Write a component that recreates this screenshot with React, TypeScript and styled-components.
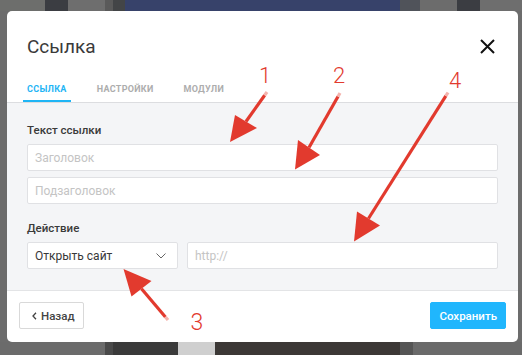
import * as React from 'react';
import styled, {createGlobalStyle} from 'styled-components';

const GlobalStyle = createGlobalStyle`
  html, body {
    margin: 0;
    padding: 0;
    width: 522px;
    height: 355px;
    overflow: hidden;
  }
  body {
    font-family: Roboto, "Noto Sans", "Liberation Sans", sans-serif;
  }
  * {
    box-sizing: border-box;
  }
`;

// the page behind the dialog: a dimmed site, only strips of it visible
const Backdrop = styled.div`
  position: relative;
  width: 522px;
  height: 355px;
  padding: 11px 4px 0 7px;
  background:
    linear-gradient(90deg,
      #6d6e6c 0 45px, #3b3d42 45px 68px, #6e6e6e 68px 105px,
      #5a5a5a 105px 113px, #434547 113px 125px, #37426a 125px 400px,
      #50535a 400px 420px, #6c6c6c 420px 457px, #3b3d42 457px 480px,
      #6e6e6e 480px) top / 100% 11px no-repeat,
    linear-gradient(90deg,
      #6b6b6b 0 105px, #4a4a4a 105px 113px, #3a3a3a 113px 178px,
      #cfcfcf 178px 215px, #3c3836 215px 400px, #555 400px 413px,
      #6a6a6a 413px) bottom / 100% 13px no-repeat,
    #6c6c6c;
`;

const Modal = styled.div`
  width: 511px;
  height: 331px;
  background: #fff;
  border-radius: 5px;
  display: flex;
  flex-direction: column;
  overflow: hidden;
`;

const Header = styled.div`
  height: 70px;
  flex: none;
  display: flex;
  align-items: center;
  justify-content: space-between;
  padding: 0 23px 0 20px;
`;

const Title = styled.div`
  font-size: 19px;
  line-height: 19px;
  color: #3a3a3a;
`;

const CloseBtn = styled.div`
  width: 15px;
  height: 15px;
  display: flex;
`;

const Tabs = styled.div`
  display: flex;
  flex: none;
  gap: 22px;
  padding: 0 16px;
  border-bottom: 1px solid #dcdde0;
`;

const Tab = styled.div<{ $active?: boolean }>`
  padding: 2px 4px 7px;
  font-size: 9px;
  line-height: 12px;
  font-weight: 700;
  letter-spacing: 0.3px;
  text-transform: uppercase;
  color: ${p => (p.$active ? '#1fb5f5' : '#adadad')};
  box-shadow: ${p => (p.$active ? 'inset 0 -2px 0 #1fb5f5' : 'none')};
`;

const Body = styled.div`
  flex: 1;
  background: #f4f5f7;
  padding: 20px 20px 0;
  display: flex;
  flex-direction: column;
`;

const Label = styled.div<{ $top?: number }>`
  font-size: 11.5px;
  line-height: 14px;
  font-weight: 500;
  color: #3a3a3a;
  margin: ${p => p.$top ?? 0}px 0 7px;
`;

const Field = styled.div<{ $muted?: boolean }>`
  height: 27px;
  flex: none;
  background: #fff;
  border: 1px solid #e0e1e4;
  border-radius: 2px;
  padding: 0 11px 0 7px;
  display: flex;
  align-items: center;
  justify-content: space-between;
  font-size: 12px;
  color: ${p => (p.$muted ? '#c4c4c4' : '#383838')};
`;

const Stack = styled.div`
  display: flex;
  flex-direction: column;
  gap: 6px;
`;

const Row = styled.div`
  display: grid;
  grid-template-columns: 151px 1fr;
  gap: 9px;
`;

const Footer = styled.div`
  height: 52px;
  flex: none;
  border-top: 1px solid #e3e4e6;
  display: flex;
  align-items: flex-start;
  justify-content: space-between;
  padding: 11px 12px 0;
`;

const Button = styled.div<{ $primary?: boolean }>`
  height: 27px;
  padding: 0 ${p => (p.$primary ? 8 : 8)}px 0 ${p => (p.$primary ? 8 : 12)}px;
  display: flex;
  align-items: center;
  gap: 4px;
  border-radius: 2px;
  font-size: 11.5px;
  font-weight: 500;
  color: ${p => (p.$primary ? '#fff' : '#444')};
  background: ${p => (p.$primary ? '#20b6fd' : '#fff')};
  border: 1px solid ${p => (p.$primary ? '#20b6fd' : '#d9d9d9')};
`;

const Overlay = styled.svg`
  position: absolute;
  left: 0;
  top: 0;
  pointer-events: none;
`;

const Num = styled.text`
  font-family: Roboto, "Liberation Sans", sans-serif;
  font-weight: 300;
  fill: #e23a2e;
`;

type Arrow = {
  tail: [number, number];
  tip: [number, number];
  wings: [[number, number], [number, number]];
};

const arrows: Arrow[] = [
  {tail: [267, 92], tip: [230, 142], wings: [[235, 115], [257, 128]]},
  {tail: [340, 93], tip: [295, 169.5], wings: [[298, 140], [320, 155]]},
  {tail: [448, 92.5], tip: [354, 241.5], wings: [[357, 211.5], [380, 225.5]]},
  {tail: [168, 320], tip: [123.5, 269], wings: [[131.5, 296.5], [151.5, 281]]},
];

const numbers = [
  {n: '1', x: 265, y: 83, size: 22},
  {n: '2', x: 339, y: 82.5, size: 22},
  {n: '4', x: 455, y: 88, size: 22},
  {n: '3', x: 197, y: 330, size: 23},
];

function Annotations() {
  return (
    <Overlay width={522} height={355} viewBox="0 0 522 355">
      {arrows.map((a, i) => {
        const [tx, ty] = a.tail;
        const [w1, w2] = a.wings;
        const bx = (w1[0] + w2[0]) / 2;
        const by = (w1[1] + w2[1]) / 2;
        const dx = bx - tx;
        const dy = by - ty;
        const len = Math.hypot(dx, dy);
        const fx = tx + (dx / len) * 4;
        const fy = ty + (dy / len) * 4;
        return (
          <g key={i}>
            <line x1={fx} y1={fy} x2={bx} y2={by} stroke="#e23a2e" strokeWidth={3.2}/>
            <line x1={tx} y1={ty} x2={fx} y2={fy} stroke="#f4b3ad" strokeWidth={3.2}/>
            <polygon
              points={`${a.tip.join(',')} ${w1.join(',')} ${w2.join(',')}`}
              fill="#e23a2e"
            />
          </g>
        );
      })}
      {numbers.map(d => (
        <Num key={d.n} x={d.x} y={d.y} fontSize={d.size} textAnchor="middle">
          {d.n}
        </Num>
      ))}
    </Overlay>
  );
}

export default function App() {
  return (
    <Backdrop>
      <GlobalStyle/>
      <Modal>
        <Header>
          <Title>Ссылка</Title>
          <CloseBtn>
            <svg width="15" height="15" viewBox="0 0 15 15">
              <path d="M1 1 L14 14 M14 1 L1 14" stroke="#111" strokeWidth="2"/>
            </svg>
          </CloseBtn>
        </Header>
        <Tabs>
          <Tab $active>Ссылка</Tab>
          <Tab>Настройки</Tab>
          <Tab>Модули</Tab>
        </Tabs>
        <Body>
          <Label>Текст ссылки</Label>
          <Stack>
            <Field $muted>Заголовок</Field>
            <Field $muted>Подзаголовок</Field>
          </Stack>
          <Label $top={17}>Действие</Label>
          <Row>
            <Field>
              Открыть сайт
              <svg width="10" height="6" viewBox="0 0 10 6">
                <path d="M0.5 0.5 L5 5 L9.5 0.5" fill="none" stroke="#666" strokeWidth="1"/>
              </svg>
            </Field>
            <Field $muted>http://</Field>
          </Row>
        </Body>
        <Footer>
          <Button>
            <svg width="5" height="8" viewBox="0 0 5 8">
              <path d="M4 0.8 L1 4 L4 7.2" fill="none" stroke="#444" strokeWidth="1.3"/>
            </svg>
            Назад
          </Button>
          <Button $primary>Сохранить</Button>
        </Footer>
      </Modal>
      <Annotations/>
    </Backdrop>
  );
}
